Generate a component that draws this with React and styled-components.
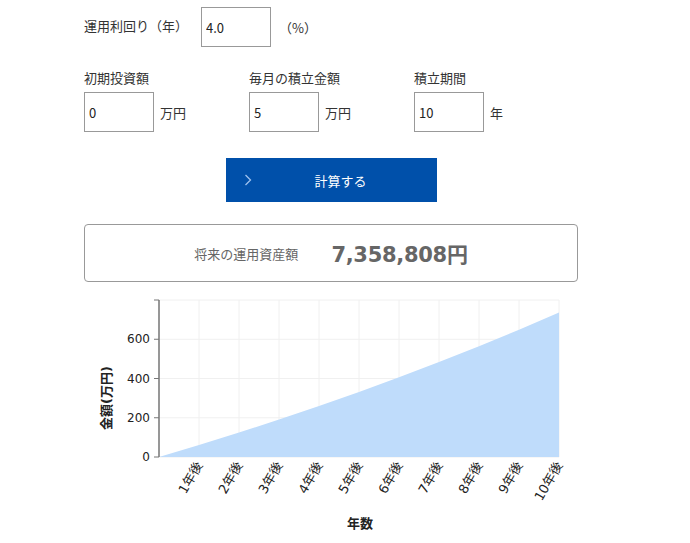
import React from "react";
import styled, { createGlobalStyle } from "styled-components";

const GlobalStyle = createGlobalStyle`
  body {
    margin: 0;
    background: #fff;
    font-family: "Noto Sans CJK JP", "Liberation Sans", sans-serif;
    color: #333;
  }
`;

const Page = styled.div`
  width: 690px;
  padding: 7px 0 0 84px;
  box-sizing: border-box;
`;

const RateRow = styled.div`
  display: flex;
  align-items: center;
  height: 40px;
`;

const Label = styled.span`
  font-size: 13px;
  line-height: 1;
  color: #333;
`;

const RateLabel = styled(Label)`
  margin-top: -3px;
`;

const Unit = styled.span`
  font-size: 13px;
  color: #333;
  margin-left: ${({ gap }) => gap}px;
`;

const NumInput = styled.input`
  width: 70px;
  height: 40px;
  box-sizing: border-box;
  border: 1px solid #999;
  border-radius: 0;
  padding: 0 4px;
  font-family: "Noto Sans CJK JP", "Liberation Sans", sans-serif;
  font-size: 13px;
  color: #222;
  margin-left: ${({ gap }) => gap || 0}px;
  outline: none;
`;

const FieldRow = styled.div`
  display: flex;
  margin-top: 24px;
`;

const Field = styled.div`
  width: 165px;
  display: flex;
  flex-direction: column;
`;

const FieldLabel = styled(Label)`
  height: 15px;
  margin-bottom: 6px;
`;

const InputLine = styled.div`
  display: flex;
  align-items: center;
`;

const CalcButton = styled.button`
  display: flex;
  align-items: center;
  width: 211px;
  height: 44px;
  margin: 26px 0 0 142px;
  background: #0050aa;
  border: none;
  color: #fff;
  font-family: "Noto Sans CJK JP", "Liberation Sans", sans-serif;
  font-size: 13px;
  cursor: pointer;
  padding: 0 0 0 18px;
`;

const ButtonText = styled.span`
  flex: 1;
  text-align: center;
  margin-right: 8px;
`;

const ResultBox = styled.div`
  width: 494px;
  height: 58px;
  box-sizing: border-box;
  margin-top: 22px;
  border: 1px solid #999;
  border-radius: 4px;
  display: flex;
  align-items: center;
  justify-content: center;
  gap: 33px;
`;

const ResultLabel = styled.span`
  font-size: 13px;
  color: #666;
`;

const ResultValue = styled.span`
  font-size: 21px;
  font-weight: bold;
  color: #666;
  font-family: "DejaVu Sans", "Noto Sans CJK JP", sans-serif;
  letter-spacing: -0.3px;
`;

const ChartWrap = styled.div`
  margin: 10px 0 0 -84px;
`;

const rate = 0.04 / 12;
const monthly = 5;
const values = Array.from({ length: 11 }, (_, y) => {
  const n = y * 12;
  return n === 0 ? 0 : (monthly * (Math.pow(1 + rate, n) - 1)) / rate;
});

const left = 159;
const right = 559;
const bottom = 165;
const top = 8;
const yMax = 800;
const px = (i) => left + i * 40;
const py = (v) => bottom - (v / yMax) * (bottom - top);

function Chart() {
  const area =
    `M${px(0)},${py(0)} ` +
    values.map((v, i) => `L${px(i)},${py(v)}`).join(" ") +
    ` L${px(10)},${bottom} Z`;
  const tickFont = { fontFamily: "'DejaVu Sans', 'Noto Sans CJK JP', sans-serif", fontSize: 12, fill: "#222" };
  return (
    <svg width="690" height="245" viewBox="0 0 690 245">
      {[0, 200, 400, 600, 800].map((v) => (
        <line key={v} x1={left} x2={right} y1={py(v)} y2={py(v)} stroke="#f0f0f0" />
      ))}
      {values.map((_, i) => (
        <line key={i} x1={px(i)} x2={px(i)} y1={top} y2={bottom} stroke="#f0f0f0" />
      ))}
      <path d={area} fill="#bfdcfb" />
      <line x1={left} x2={left} y1={top} y2={bottom} stroke="#777" strokeWidth="1.5" />
      {[0, 200, 400, 600, 800].map((v) => (
        <line key={v} x1={left - 5} x2={left} y1={py(v)} y2={py(v)} stroke="#777" />
      ))}
      {[0, 200, 400, 600].map((v) => (
        <text key={v} x={left - 9} y={py(v) + 4} textAnchor="end" style={tickFont}>
          {v}
        </text>
      ))}
      {values.slice(1).map((_, i) => (
        <text
          key={i}
          transform={`translate(${px(i + 1) + 4},${bottom + 8}) rotate(-60)`}
          textAnchor="end"
          style={{ ...tickFont, fontSize: 13 }}
        >
          {i + 1}年後
        </text>
      ))}
      <text
        transform={`translate(111,${py(300)}) rotate(-90)`}
        textAnchor="middle"
        style={{ ...tickFont, fontSize: 13, fontWeight: "bold" }}
      >
        金額(万円)
      </text>
      <text x={360} y={236} textAnchor="middle" style={{ ...tickFont, fontSize: 13, fontWeight: "bold" }}>
        年数
      </text>
    </svg>
  );
}

const fields = [
  { label: "初期投資額", value: "0", unit: "万円" },
  { label: "毎月の積立金額", value: "5", unit: "万円" },
  { label: "積立期間", value: "10", unit: "年" },
];

export default function App() {
  return (
    <>
      <GlobalStyle />
      <Page>
        <RateRow>
          <RateLabel>運用利回り（年）</RateLabel>
          <NumInput gap={13} defaultValue="4.0" />
          <Unit gap={8}>（%）</Unit>
        </RateRow>
        <FieldRow>
          {fields.map((f) => (
            <Field key={f.label}>
              <FieldLabel>{f.label}</FieldLabel>
              <InputLine>
                <NumInput defaultValue={f.value} />
                <Unit gap={6}>{f.unit}</Unit>
              </InputLine>
            </Field>
          ))}
        </FieldRow>
        <CalcButton>
          <svg width="8" height="12" viewBox="0 0 8 12">
            <path d="M1.5 1 L6.5 6 L1.5 11" fill="none" stroke="#9ec2ee" strokeWidth="1.3" />
          </svg>
          <ButtonText>計算する</ButtonText>
        </CalcButton>
        <ResultBox>
          <ResultLabel>将来の運用資産額</ResultLabel>
          <ResultValue>7,358,808円</ResultValue>
        </ResultBox>
        <ChartWrap>
          <Chart />
        </ChartWrap>
      </Page>
    </>
  );
}
